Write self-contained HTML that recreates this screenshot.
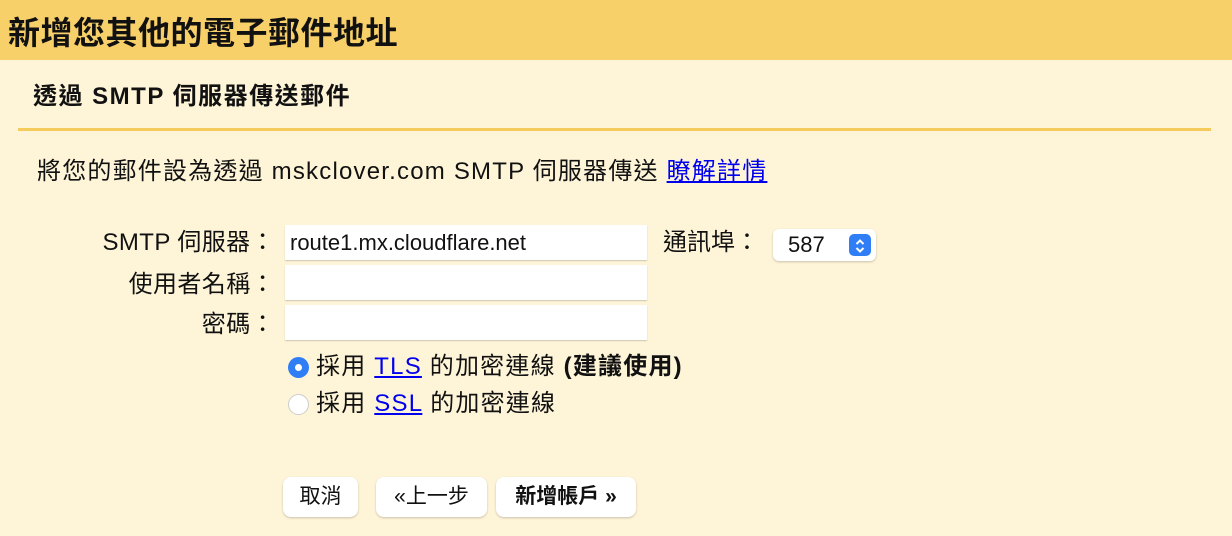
<!DOCTYPE html>
<html><head><meta charset="utf-8"><style>
*{margin:0;padding:0;box-sizing:border-box}
body{width:1232px;height:536px;background:#fef5d8;font-family:"Liberation Sans","Noto Sans CJK TC",sans-serif;color:#111;position:relative;overflow:hidden}
.a{position:absolute;white-space:nowrap}
.hdr{left:0;top:0;width:1232px;height:60px;background:#f8d069}
.t1{left:8px;top:13px;font-size:32px;font-weight:bold;line-height:40px;letter-spacing:0.5px}
.t2{left:33px;top:82px;font-size:24px;font-weight:bold;line-height:30px;letter-spacing:1.5px}
.line{left:18px;top:128px;width:1193px;height:3px;background:#f5cc5c}
.f{font-size:24px;line-height:30px}
.ls{letter-spacing:1.2px}
a{color:#0000ee;text-decoration:underline}
.lab{text-align:right;width:200px;left:75px;letter-spacing:0.4px}
.in{background:#fff;height:35px;width:362px;left:285px;box-shadow:0 1px 1px #cfc6b0;font-size:22px;line-height:35px;padding-left:5px}
.btn{background:#fff;border-radius:8px;box-shadow:0 1px 2px #c9bfa8;height:40px;top:477px;font-size:21px;line-height:40px;text-align:center}
.sel{left:773px;top:229px;width:103px;height:32px;background:#fff;border-radius:6px;box-shadow:0 1px 2px #c9bfa8;font-size:22px;line-height:32px;padding-left:15px}
.sb{position:absolute;right:5px;top:5px;width:22px;height:22px;background:#2f7ef6;border-radius:5px}
.r{width:21px;height:21px;border-radius:50%;left:288px}
</style></head><body>
<div class="a hdr"></div>
<div class="a t1">新增您其他的電子郵件地址</div>
<div class="a t2">透過 SMTP 伺服器傳送郵件</div>
<div class="a line"></div>
<div class="a f ls" style="left:37px;top:157px">將您的郵件設為透過 mskclover.com SMTP 伺服器傳送 <a>瞭解詳情</a></div>
<div class="a f lab" style="top:228px">SMTP 伺服器：</div>
<div class="a f lab" style="top:270px">使用者名稱：</div>
<div class="a f lab" style="top:310px">密碼：</div>
<div class="a in" style="top:225px">route1.mx.cloudflare.net</div>
<div class="a in" style="top:265px"></div>
<div class="a in" style="top:305px"></div>
<div class="a f" style="left:663px;top:228px">通訊埠：</div>
<div class="a sel">587<div class="sb"><svg width="22" height="22" viewBox="0 0 22 22"><path d="M7.5 9 L11 5.5 L14.5 9 M7.5 13 L11 16.5 L14.5 13" stroke="#fff" stroke-width="2" fill="none"/></svg></div></div>
<div class="a r" style="top:357px;background:#2f7ef6"><div style="position:absolute;left:7px;top:7px;width:7px;height:7px;border-radius:50%;background:#fff"></div></div>
<div class="a r" style="top:394px;background:#fff;border:1px solid #ccc"></div>
<div class="a f ls" style="left:316px;top:352px">採用 <a>TLS</a> 的加密連線 <b>(建議使用)</b></div>
<div class="a f ls" style="left:316px;top:389px">採用 <a>SSL</a> 的加密連線</div>
<div class="a btn" style="left:283px;width:75px">取消</div>
<div class="a btn" style="left:376px;width:111px">«上一步</div>
<div class="a btn" style="left:496px;width:140px;font-weight:bold">新增帳戶 »</div>
</body></html>
